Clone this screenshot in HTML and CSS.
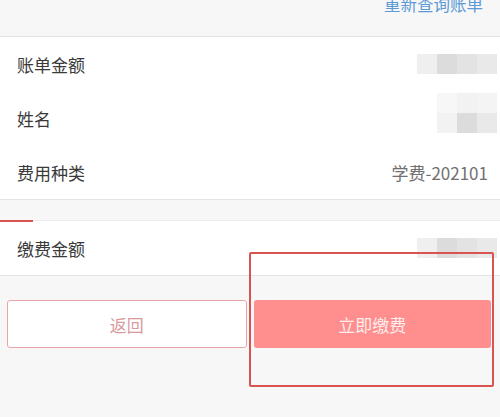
FILE: index.html
```html
<!DOCTYPE html>
<html lang="zh">
<head>
<meta charset="utf-8">
<link rel="stylesheet" href="styles.css">
</head>
<body>
<div class="page">
  <div class="topbar"><span class="relink">重新查询账单</span></div>
  <div class="section">
    <div class="row">
      <span class="label">账单金额</span>
      <div class="mosaic m4">
        <i class="c1"></i><i class="c2"></i><i class="c3"></i><i class="c4"></i>
      </div>
    </div>
    <div class="row">
      <span class="label">姓名</span>
      <div class="mosaic m3x2">
        <i class="c6"></i><i class="c5"></i><i class="c7"></i>
        <i class="c5"></i><i class="c2"></i><i class="c4"></i>
      </div>
    </div>
    <div class="row">
      <span class="label">费用种类</span>
      <span class="value">学费-202101</span>
    </div>
  </div>
  <div class="gap"></div>
  <div class="section pay">
    <span class="redmark"></span>
    <div class="row">
      <span class="label">缴费金额</span>
      <div class="mosaic m4">
        <i class="c1"></i><i class="c2"></i><i class="c3"></i><i class="c4"></i>
      </div>
    </div>
  </div>
  <div class="actions">
    <button class="btn back">返回</button>
    <button class="btn paynow">立即缴费</button>
  </div>
  <div class="highlight"></div>
</div>
</body>
</html>
```
FILE: styles.css
```css
html, body {
  margin: 0;
  padding: 0;
  background: #f7f7f7;
}
.page {
  position: relative;
  width: 500px;
  height: 417px;
  overflow: hidden;
  font-family: "Noto Sans CJK SC", "Noto Sans", sans-serif;
  background: #f7f7f7;
}
.topbar {
  height: 36px;
  border-bottom: 1px solid #e2e2e2;
  display: flex;
  justify-content: flex-end;
  align-items: flex-start;
  padding-right: 17px;
}
.relink {
  margin-top: -6px;
  font-size: 16.5px;
  line-height: 20px;
  color: #5c9ad6;
}
.section {
  position: relative;
  background: #fff;
  border-bottom: 1px solid #e4e4e4;
}
.pay {
  border-top: 1px solid #ececec;
}
.row {
  height: 54px;
  display: flex;
  align-items: center;
  justify-content: space-between;
  padding-left: 17px;
  padding-right: 12px;
}
.label {
  font-size: 17px;
  color: #3a3a3a;
}
.value {
  font-size: 17px;
  color: #707070;
}
.mosaic {
  display: grid;
  grid-auto-rows: 20px;
  margin-right: -9px;
}
.mosaic i {
  display: block;
}
.m4 {
  grid-template-columns: repeat(4, 20px);
}
.m3x2 {
  grid-template-columns: repeat(3, 20px);
  margin-top: -10px;
}
.c1 { background: #efefef; }
.c2 { background: #dcdcdc; }
.c3 { background: #e3e3e3; }
.c4 { background: #e9e9e9; }
.c5 { background: #f2f2f2; }
.c6 { background: #f7f7f7; }
.c7 { background: #f4f4f4; }
.gap {
  height: 20px;
}
.redmark {
  position: absolute;
  left: 0;
  top: -1px;
  width: 33px;
  height: 2px;
  background: #d9534f;
}
.actions {
  display: flex;
  gap: 7px;
  padding: 24px 9px 0 7px;
}
.btn {
  flex: 1;
  height: 48px;
  border-radius: 3px;
  font-family: "Noto Sans CJK SC", "Noto Sans", sans-serif;
  font-size: 17px;
  cursor: pointer;
}
.back {
  background: #fff;
  border: 1px solid #e8a6a8;
  color: #d99a9c;
}
.paynow {
  background: #ff8e8e;
  border: none;
  color: #fdecec;
}
.highlight {
  position: absolute;
  left: 249px;
  top: 252px;
  width: 241px;
  height: 131px;
  border: 2px solid #d9534f;
  border-radius: 2px;
}
```
